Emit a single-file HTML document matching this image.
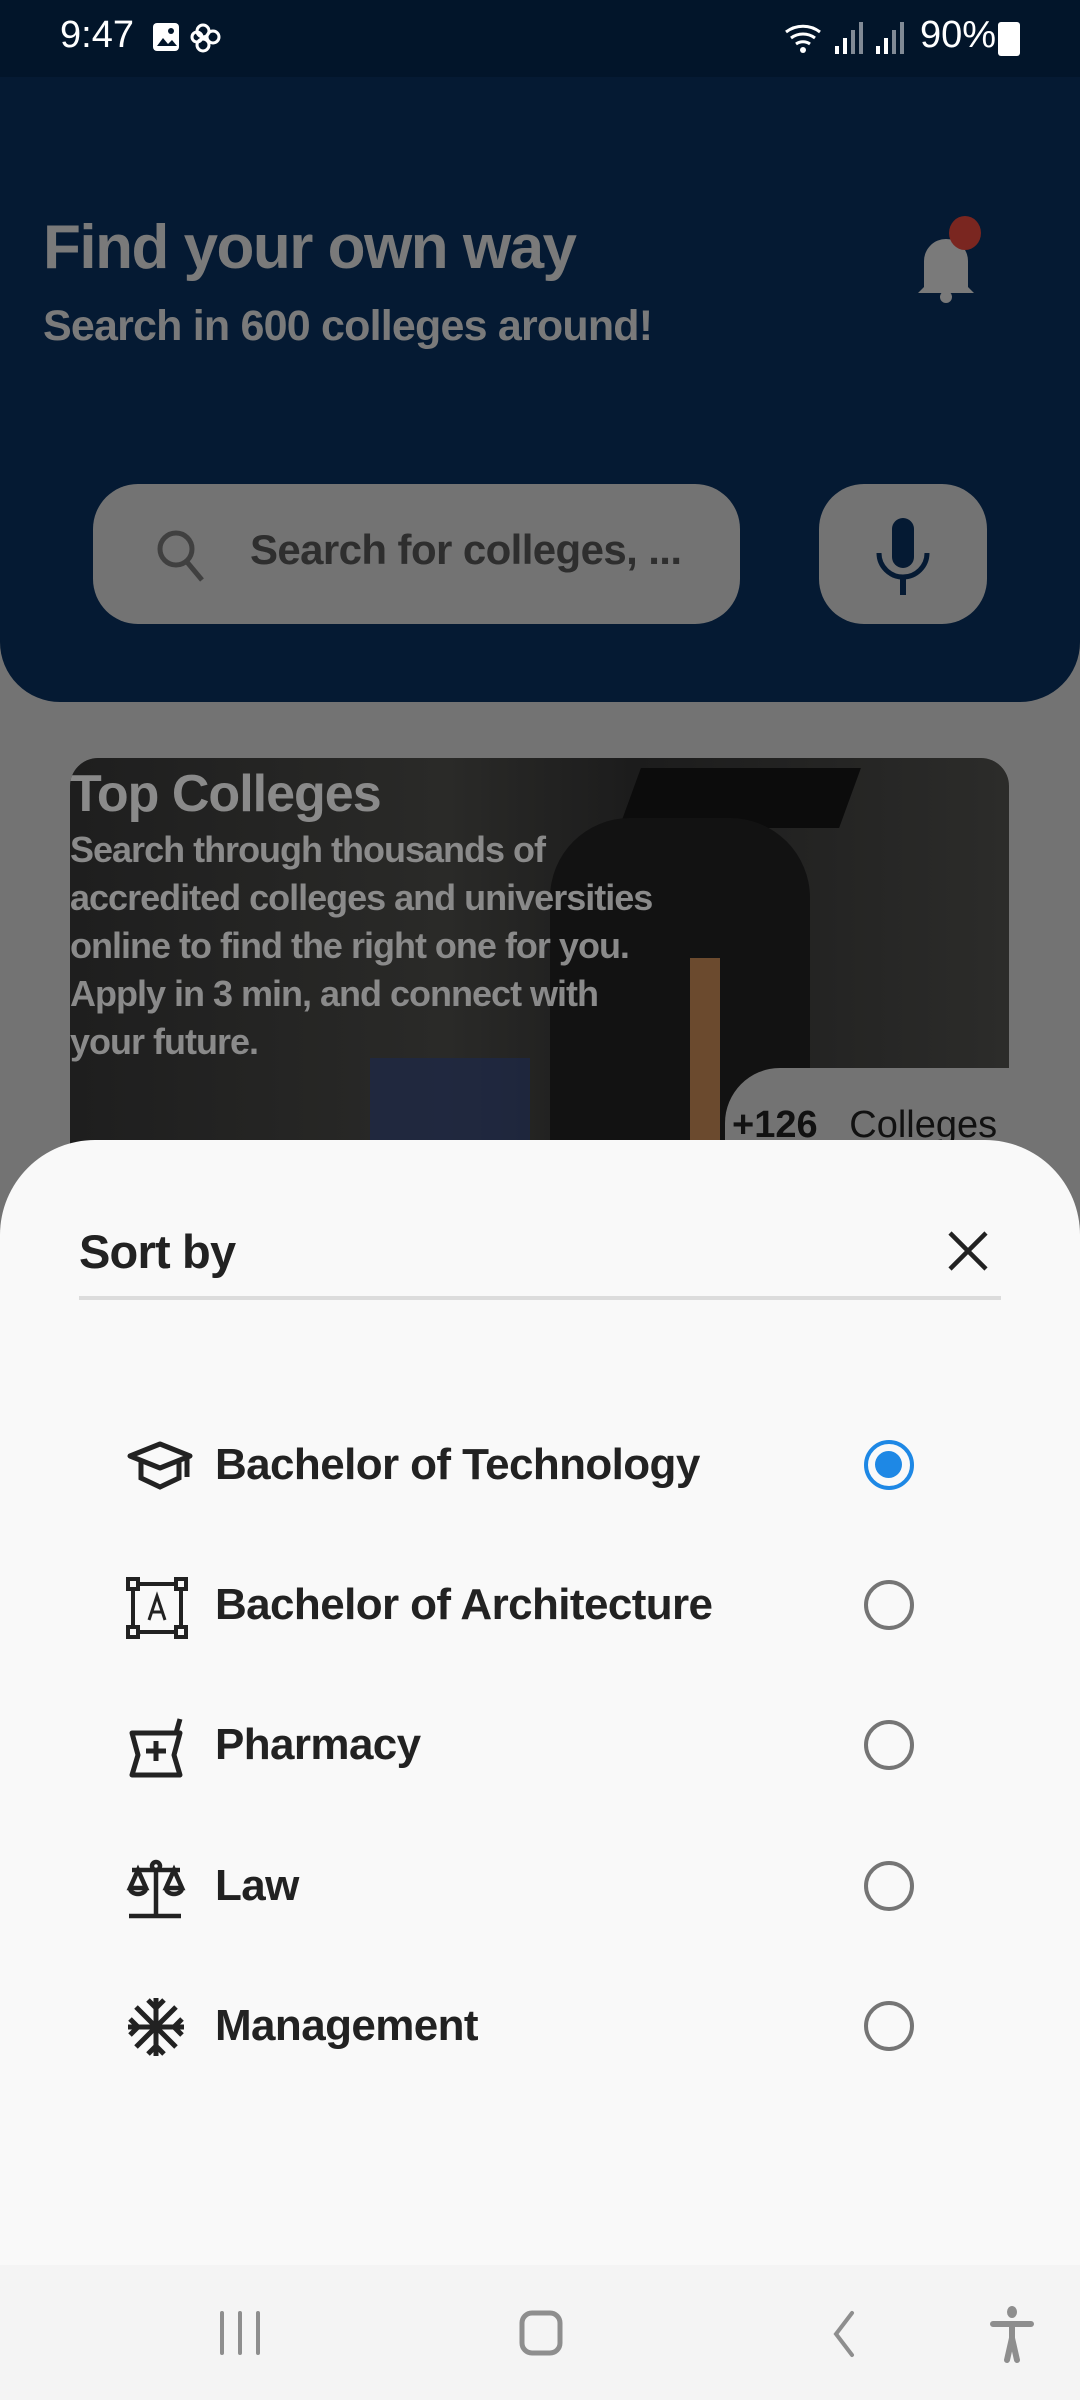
<!DOCTYPE html>
<html><head><meta charset="utf-8"><style>
*{margin:0;padding:0;box-sizing:border-box}
body{width:1080px;height:2400px;overflow:hidden;background:#737373;font-family:"Liberation Sans",sans-serif;position:relative}
.abs{position:absolute}
.status{left:0;top:0;width:1080px;height:77px;background:#02152a;color:#fff}
.header{left:0;top:77px;width:1080px;height:625px;background:#051a33;border-radius:0 0 60px 60px}
.t1{left:43px;top:212px;font-size:62px;font-weight:bold;color:#7a7a7a;letter-spacing:-1.5px}
.t2{left:43px;top:302px;font-size:43px;font-weight:bold;color:#7a7a7a;letter-spacing:-0.8px}
.search{left:93px;top:484px;width:647px;height:140px;background:#737373;border-radius:45px}
.mic{left:819px;top:484px;width:168px;height:140px;background:#737373;border-radius:45px}
.stxt{left:250px;top:526px;font-size:42px;font-weight:bold;color:#2e2e2e;letter-spacing:-0.6px}
.card{left:70px;top:758px;width:939px;height:420px;border-radius:28px;overflow:hidden;background:linear-gradient(90deg,#1e1e1e,#2a2a28 40%,#1c1c1c 60%,#2c2c2a)}
.ct{font-weight:bold;color:#8a8a8a;letter-spacing:-1px}
.sheet{left:0;top:1140px;width:1080px;height:1125px;background:#f9f9f9;border-radius:95px 95px 0 0}
.item{left:215px;font-size:44px;font-weight:bold;color:#222;letter-spacing:-0.6px}
.radio{left:864px;width:50px;height:50px;border-radius:50%;border:4.5px solid #757575}
.nav{left:0;top:2265px;width:1080px;height:135px;background:#f4f4f4}
</style></head><body>
<div class="abs status">
 <div class="abs" style="left:60px;top:14px;font-size:38px">9:47</div>
 <svg class="abs" style="left:150px;top:20px" width="80" height="36" viewBox="0 0 80 36"><rect x="3" y="3" width="26" height="28" rx="4" fill="#fff"/><path d="M7 26l6-8 5 6 4-4 5 6z" fill="#02152a"/><circle cx="21" cy="11" r="3" fill="#02152a"/><g fill="none" stroke="#fff" stroke-width="3"><circle cx="53" cy="11" r="6"/><circle cx="63" cy="17" r="6"/><circle cx="53" cy="25" r="6"/><circle cx="47" cy="17" r="5"/></g></svg>
 <svg class="abs" style="left:780px;top:18px" width="240" height="40" viewBox="0 0 240 40"><path d="M6 14a28 28 0 0 1 34 0M11 20a20 20 0 0 1 24 0M16 26a12 12 0 0 1 14 0" stroke="#fff" stroke-width="3" fill="none"/><circle cx="23" cy="32" r="3" fill="#fff"/><g fill="#fff"><rect x="55" y="28" width="4" height="8"/><rect x="63" y="20" width="4" height="16"/><rect x="71" y="12" width="4" height="24" opacity=".5"/><rect x="79" y="4" width="4" height="32" opacity=".5"/><rect x="96" y="28" width="4" height="8"/><rect x="104" y="20" width="4" height="16"/><rect x="112" y="12" width="4" height="24" opacity=".5"/><rect x="120" y="4" width="4" height="32" opacity=".5"/></g></svg>
 <div class="abs" style="left:920px;top:14px;font-size:38px">90%</div>
 <div class="abs" style="left:998px;top:22px;width:22px;height:34px;background:#fff;border-radius:3px"></div>
</div>
<div class="abs header"></div>
<div class="abs t1">Find your own way</div>
<div class="abs t2">Search in 600 colleges around!</div>
<svg class="abs" style="left:910px;top:215px" width="80" height="90" viewBox="0 0 80 90"><path d="M14 72V46a22 22 0 0 1 44 0v26l6 6H8z" fill="#7a7a7a"/><circle cx="36" cy="82" r="6" fill="#7a7a7a"/><ellipse cx="55" cy="18" rx="16" ry="17" fill="#7a2620"/></svg>
<div class="abs search"></div>
<svg class="abs" style="left:152px;top:523px" width="60" height="66" viewBox="0 0 60 66"><circle cx="24" cy="26" r="16" stroke="#404040" stroke-width="5" fill="none"/><path d="M35 39l15 18" stroke="#404040" stroke-width="5"/></svg>
<div class="abs stxt">Search for colleges, ...</div>
<div class="abs mic"></div>
<svg class="abs" style="left:870px;top:515px" width="66" height="82" viewBox="0 0 66 82"><rect x="22" y="3" width="22" height="50" rx="11" fill="#051a33"/><path d="M9 38a24 24 0 0 0 48 0" stroke="#051a33" stroke-width="5" fill="none"/><path d="M33 62v18" stroke="#051a33" stroke-width="6"/></svg>
<div class="abs card">
 <div class="abs" style="left:560px;top:10px;width:220px;height:60px;background:#0c0c0c;transform:skewX(-20deg)"></div>
 <div class="abs" style="left:480px;top:60px;width:260px;height:360px;background:#121212;border-radius:80px 80px 0 0"></div>
 <div class="abs" style="left:620px;top:200px;width:30px;height:230px;background:#6b4a2e"></div>
 <div class="abs" style="left:300px;top:300px;width:160px;height:120px;background:#1d2848;opacity:.7"></div>
 <div class="abs" style="left:655px;top:310px;width:300px;height:120px;background:#737373;border-radius:55px 0 0 0"></div>
 <div class="abs ct" style="left:0;top:6px;font-size:52px">Top Colleges</div>
 <div class="abs ct" style="left:0;top:68px;font-size:36px;line-height:48px;white-space:nowrap">Search through thousands of<br>accredited colleges and universities<br>online to find the right one for you.<br>Apply in 3 min, and connect with<br>your future.</div>
 <div class="abs" style="left:662px;top:346px;font-size:38px;color:#111"><b>+126</b>&nbsp;&nbsp; Colleges</div>
</div>
<div class="abs sheet"></div>
<div class="abs" style="left:79px;top:1224px;font-size:47px;font-weight:bold;color:#222;letter-spacing:-0.8px">Sort by</div>
<svg class="abs" style="left:945px;top:1228px" width="46" height="46" viewBox="0 0 46 46"><path d="M5 5l36 36M41 5L5 41" stroke="#222" stroke-width="4.5"/></svg>
<div class="abs" style="left:79px;top:1296px;width:922px;height:4px;background:#dcdcdc"></div>

<svg class="abs" style="left:125px;top:1440px" width="70" height="50" viewBox="0 0 70 50"><path d="M5 16L35 4l30 12-30 12z" stroke="#222" stroke-width="5" fill="none" stroke-linejoin="round"/><path d="M16 22v16l19 9 19-9V22M62 17v20" stroke="#222" stroke-width="5" fill="none"/></svg>
<div class="abs item" style="left:215px;top:1440px">Bachelor of Technology</div>
<div class="abs radio" style="top:1440px;border-color:#1e88e5"><div style="position:absolute;left:7px;top:7px;width:27px;height:27px;border-radius:50%;background:#1e88e5"></div></div>

<svg class="abs" style="left:125px;top:1576px" width="64" height="64" viewBox="0 0 64 64"><g fill="none" stroke="#222" stroke-width="4"><rect x="3" y="3" width="10" height="10"/><rect x="51" y="3" width="10" height="10"/><rect x="3" y="51" width="10" height="10"/><rect x="51" y="51" width="10" height="10"/><path d="M13 8h38M13 56h38M8 13v38M56 13v38"/><path d="M24 44l8-24 8 24M27 36h10" stroke-width="3"/></g></svg>
<div class="abs item" style="top:1580px">Bachelor of Architecture</div>
<div class="abs radio" style="top:1580px"></div>

<svg class="abs" style="left:128px;top:1715px" width="60" height="64" viewBox="0 0 60 64"><path d="M4 18h48l-6 22 6 20H4l6-20z" stroke="#222" stroke-width="5" fill="none" stroke-linejoin="round"/><path d="M28 26v20M18 36h20" stroke="#222" stroke-width="5"/><path d="M48 18l4-14" stroke="#222" stroke-width="5"/></svg>
<div class="abs item" style="top:1720px">Pharmacy</div>
<div class="abs radio" style="top:1720px"></div>

<svg class="abs" style="left:126px;top:1858px" width="60" height="64" viewBox="0 0 60 64"><g stroke="#222" stroke-width="4.5" fill="none"><path d="M30 12v44M3 58h52M6 12h48"/><circle cx="30" cy="8" r="4"/><path d="M12 12L4 30h16zM48 12l-8 18h16z"/><path d="M4 30a8 6 0 0 0 16 0M40 30a8 6 0 0 0 16 0"/></g></svg>
<div class="abs item" style="top:1861px">Law</div>
<div class="abs radio" style="top:1861px"></div>

<svg class="abs" style="left:126px;top:1996px" width="60" height="62" viewBox="0 0 60 62"><g stroke="#222" stroke-width="5" fill="none"><path d="M30 2v58M2 31h56M10 11l40 40M50 11L10 51M22 4l8 8 8-8M22 58l8-8 8 8M4 23l8 8-8 8M56 23l-8 8 8 8"/></g></svg>
<div class="abs item" style="top:2001px">Management</div>
<div class="abs radio" style="top:2001px"></div>

<div class="abs nav">
 <svg class="abs" style="left:215px;top:45px" width="50" height="48" viewBox="0 0 50 48"><path d="M7 3v40M25 3v40M43 3v40" stroke="#8e8e8e" stroke-width="4" stroke-linecap="round"/></svg>
 <svg class="abs" style="left:518px;top:44px" width="48" height="50" viewBox="0 0 48 50"><rect x="4" y="4" width="38" height="40" rx="10" stroke="#8e8e8e" stroke-width="5" fill="none"/></svg>
 <svg class="abs" style="left:826px;top:45px" width="34" height="48" viewBox="0 0 34 48"><path d="M26 3L10 24l16 21" stroke="#8e8e8e" stroke-width="4" fill="none" stroke-linecap="round"/></svg>
 <svg class="abs" style="left:990px;top:40px" width="44" height="58" viewBox="0 0 44 58"><ellipse cx="22" cy="7" rx="5" ry="6" fill="#8e8e8e"/><path d="M3 19h38M22 19v14M22 33l-5 22M22 33l5 22" stroke="#8e8e8e" stroke-width="6" stroke-linecap="round"/></svg>
</div>
</body></html>
